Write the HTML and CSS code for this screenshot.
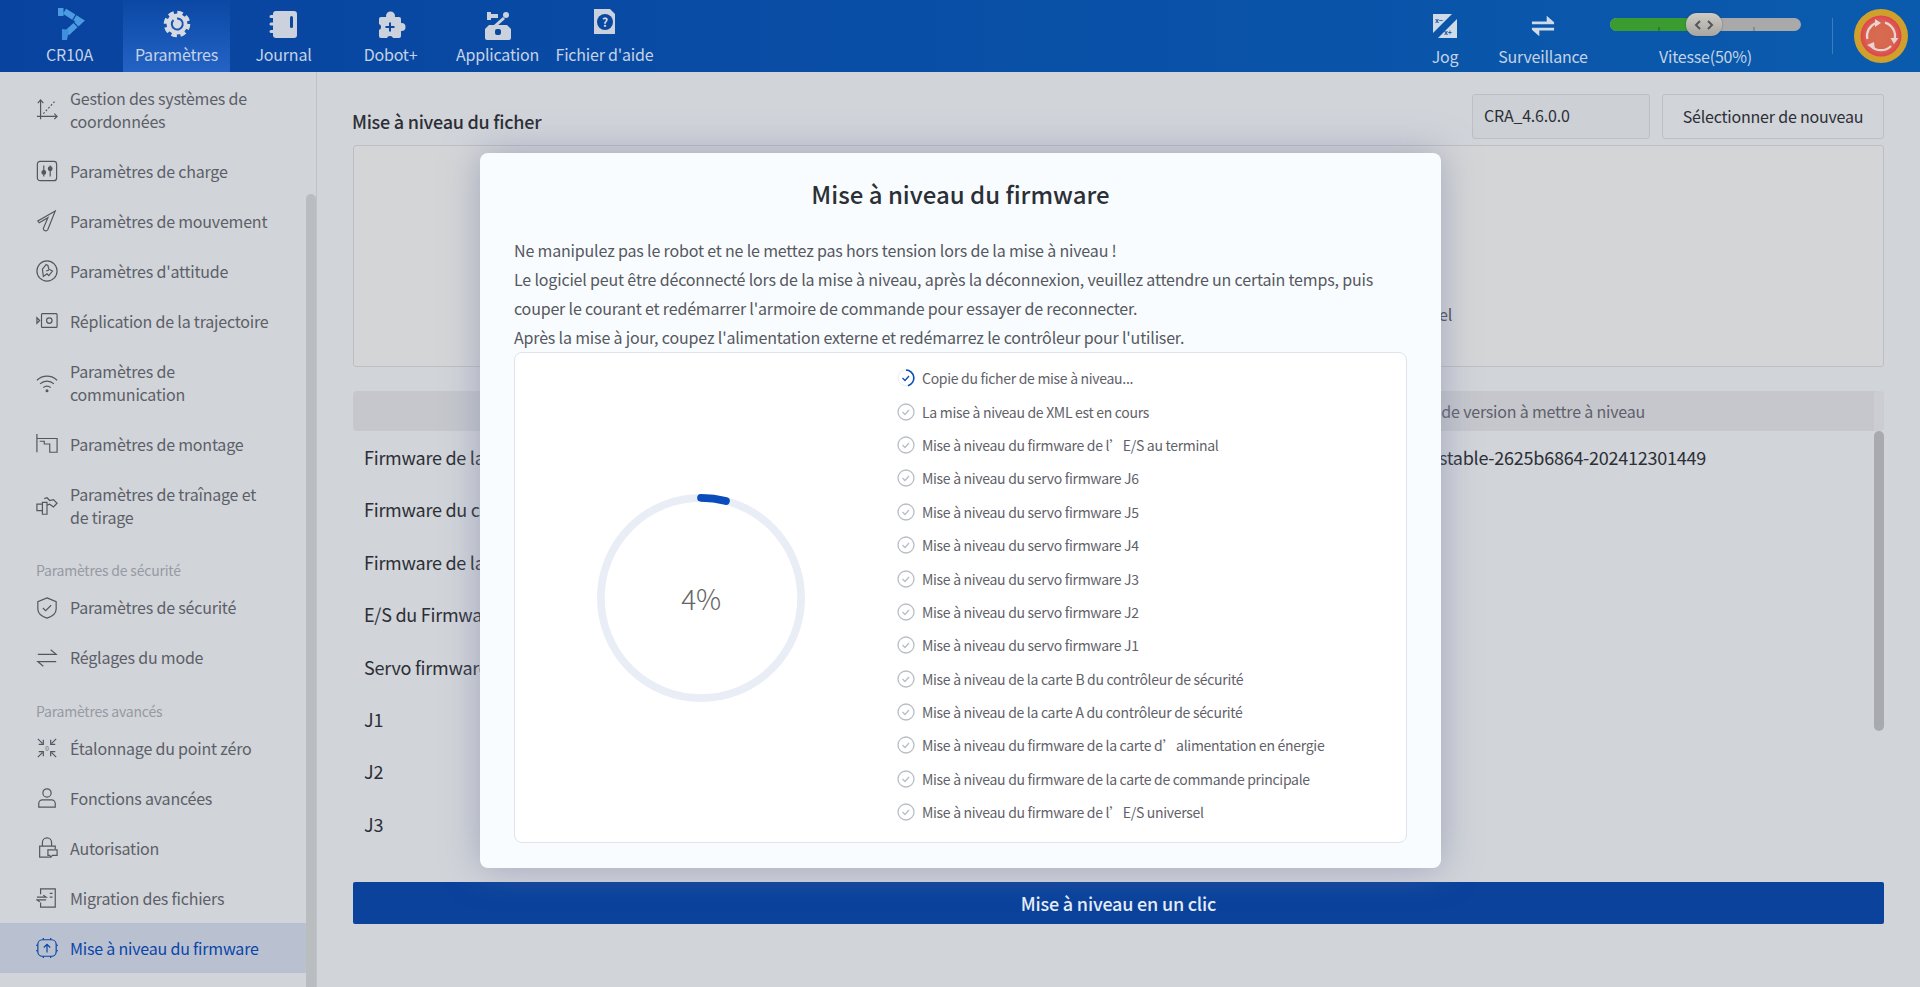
FILE: index.html
```html
<!doctype html>
<html lang="fr">
<head>
  <meta charset="utf-8" />
  <title>Mise à niveau du firmware</title>
  <link rel="stylesheet" href="styles.css">
</head>
<body>
  <header class="topbar">
    <nav class="tabs">
      <a class="tab">
        <svg class="tab-icon" viewBox="0 0 32 32"><path d="M4 0h5.500v8H4z" fill="#4a9be2"/><path d="M10.500 3.300L26 13 13 25" fill="none" stroke="#4a9be2" stroke-width="6" stroke-dasharray="11 1.200 11 1.200 14"/><path d="M8 21l7 1-2 10H8z" fill="#3f8fdc"/></svg>
        <span>CR10A</span>
      </a>
      <a class="tab active">
        <svg class="tab-icon" viewBox="0 0 32 32"><circle cx="16" cy="16" r="10.500" fill="#d5dae3"/><circle cx="16" cy="16" r="11.500" fill="none" stroke="#d5dae3" stroke-width="3.500" stroke-dasharray="5.500 3.530" stroke-linejoin="round"/><path d="M12.500 12a5.500 5.500 0 1 0 3.500-1.500" fill="none" stroke="#1a54b4" stroke-width="2"/></svg>
        <span>Paramètres</span>
      </a>
      <a class="tab">
        <svg class="tab-icon" viewBox="0 0 32 32"><rect x="5" y="3" width="24" height="27" rx="3" fill="#ccd2dd"/><path d="M3 8.500h4M3 16h4M3 23.500h4" stroke="#ccd2dd" stroke-width="3" stroke-linecap="round"/><rect x="22" y="8" width="3" height="12" rx="1.500" fill="#0a479f"/></svg>
        <span>Journal</span>
      </a>
      <a class="tab">
        <svg class="tab-icon" viewBox="0 0 32 32"><rect x="4" y="9" width="22" height="21" rx="2" fill="#ccd2dd"/><circle cx="15.500" cy="8" r="4.500" fill="#ccd2dd"/><circle cx="26.500" cy="19" r="4" fill="#ccd2dd"/><circle cx="3" cy="19" r="3" fill="#0a479f"/><circle cx="15" cy="31" r="3" fill="#0a479f"/><path d="M15 14.500v9M10.500 19h9" stroke="#0a479f" stroke-width="2"/></svg>
        <span>Dobot+</span>
      </a>
      <a class="tab">
        <svg class="tab-icon" viewBox="0 0 32 32"><path d="M5 4h4v8H5zM9 6h7v4H9z" fill="#ccd2dd"/><circle cx="24" cy="7" r="3" fill="#ccd2dd"/><path d="M22 10l-9 8" stroke="#ccd2dd" stroke-width="3"/><path d="M7 17h18l4 4v9a2 2 0 0 1-2 2H5a2 2 0 0 1-2-2v-9z" fill="#ccd2dd"/><rect x="13" y="21" width="6" height="6" rx="2" fill="#0a479f"/></svg>
        <span>Application</span>
      </a>
      <a class="tab">
        <svg class="tab-icon" viewBox="0 0 32 32"><path d="M5 1h16l5 5v20H5z" fill="#ccd2dd"/><circle cx="16" cy="14" r="8" fill="#0a479f"/><text x="16" y="18.500" class="help-mark">?</text></svg>
        <span>Fichier d'aide</span>
      </a>
    </nav>
    <div class="tools">
      <a class="tool tool-jog">
        <svg class="tool-icon" viewBox="0 0 24 24"><path d="M0 0h19L0 19zM24 5v19H5z" fill="#d0dbe8"/><text x="2" y="9" class="jog-mark">x−</text><text x="11" y="21" class="jog-mark">x+</text></svg>
        <span>Jog</span>
      </a>
      <a class="tool tool-watch">
        <svg class="tool-icon" viewBox="0 0 26 24"><path d="M1 7h16V1l8 7v2H1zM25 17H9v6L1 16v-2h24z" fill="#d0dbe8"/></svg>
        <span>Surveillance</span>
      </a>
      <div class="speed">
        <div class="slider">
          <div class="slider-fill"></div>
          <i class="tick tick-low"></i>
          <i class="tick tick-high"></i>
          <div class="slider-handle">
            <svg viewBox="0 0 20 10"><path d="M6 1L2 5l4 4M14 1l4 4-4 4" fill="none" stroke="#55565a" stroke-width="2"/></svg>
          </div>
        </div>
        <span>Vitesse(50%)</span>
      </div>
      <div class="divider"></div>
      <svg class="estop" viewBox="0 0 54 54">
        <defs><radialGradient id="stopfill"><stop offset="0" stop-color="#d56d4f"/><stop offset="0.7" stop-color="#d9654f"/><stop offset="1" stop-color="#e0434f"/></radialGradient></defs>
        <circle cx="27" cy="27" r="27" fill="#cfa02c"/>
        <circle cx="27" cy="27" r="20.500" fill="url(#stopfill)"/>
        <path d="M13.300 30A14 14 0 0 1 22 14M31 13.600A14 14 0 0 1 40.700 30M37 37A14 14 0 0 1 17 37" fill="none" stroke="#e8d5d2" stroke-width="2.200"/>
        <path d="M21 10l6 4-6 4zM36.500 29h8L40 35zM20 33l1 8-8-5z" fill="#e8d5d2"/>
      </svg>
    </div>
  </header>

  <div class="page">
    <aside class="sidebar">
      <ul class="menu">
        <li class="menu-item">
          <svg viewBox="0 0 24 24"><path d="M5 1v21M2 4.500L5 1l3 3.500M1 19h22M20 16l3 3-3 3"/><path d="M8 16L21 2" stroke-dasharray="2 2"/></svg>
          <span>Gestion des systèmes de coordonnées</span>
        </li>
        <li class="menu-item">
          <svg viewBox="0 0 24 24"><rect x="1.500" y="1.500" width="21" height="21" rx="3"/><path d="M8.500 6v12M15.500 6v12"/><circle cx="8.500" cy="13.500" r="2" class="solid"/><circle cx="15.500" cy="9.500" r="2" class="solid"/></svg>
          <span>Paramètres de charge</span>
        </li>
        <li class="menu-item">
          <svg viewBox="0 0 24 24"><path d="M21 1L2 12l1.500 2L13 8.500 8 20a2.600 2.600 0 0 0 4.800 1.500z"/></svg>
          <span>Paramètres de mouvement</span>
        </li>
        <li class="menu-item">
          <svg viewBox="0 0 24 24"><circle cx="12" cy="12" r="11"/><path d="M11 5l-4 5 1 8 4-3 2 2 4-5-4-2-1-4zM14 11l-3 1"/></svg>
          <span>Paramètres d'attitude</span>
        </li>
        <li class="menu-item">
          <svg viewBox="0 0 24 24"><rect x="6" y="4" width="17" height="15" rx="1"/><circle cx="14.500" cy="11.500" r="3"/><path d="M1 8.500l3 3-3 3z"/></svg>
          <span>Réplication de la trajectoire</span>
        </li>
        <li class="menu-item">
          <svg viewBox="0 0 24 24"><path d="M1 9c6-6 16-6 22 0M4.500 13c4-4 11-4 15 0M8 17c2-2 6-2 8 0"/><circle cx="12" cy="20.500" r="1" class="solid"/></svg>
          <span>Paramètres de communication</span>
        </li>
        <li class="menu-item">
          <svg viewBox="0 0 24 24"><path d="M1 1v20M1 6h22v15h-8v-9h-6V9H4"/></svg>
          <span>Paramètres de montage</span>
        </li>
        <li class="menu-item">
          <svg viewBox="0 0 24 24"><path d="M1 10h6v7H1zM7 8h5v13H7zM9 4l3-1 3 3 4-1 4 4-4 4-4-3-3 1"/></svg>
          <span>Paramètres de traînage et de tirage</span>
        </li>
        <li class="menu-section">Paramètres de sécurité</li>
        <li class="menu-item">
          <svg viewBox="0 0 24 24"><path d="M12 1l10 4v8c0 5-4 8-10 10C6 21 2 18 2 13V5z"/><path d="M7.500 12l3 3 6-6"/></svg>
          <span>Paramètres de sécurité</span>
        </li>
        <li class="menu-item">
          <svg viewBox="0 0 24 24"><path d="M2 8h20l-6-5M22 16H2l6 5"/></svg>
          <span>Réglages du mode</span>
        </li>
        <li class="menu-section">Paramètres avancés</li>
        <li class="menu-item">
          <svg viewBox="0 0 24 24"><path d="M2 2l5 5M22 2l-5 5M2 22l5-5M22 22l-5-5M8 3v5H3M16 3v5h5M3 16h5v5M21 16h-5v5"/><text x="12" y="15" class="zero-mark">0</text></svg>
          <span>Étalonnage du point zéro</span>
        </li>
        <li class="menu-item">
          <svg viewBox="0 0 24 24"><circle cx="12" cy="6.500" r="4.500"/><path d="M3 22v-4a4 4 0 0 1 4-4h10a4 4 0 0 1 4 4v4z"/></svg>
          <span>Fonctions avancées</span>
        </li>
        <li class="menu-item">
          <svg viewBox="0 0 24 24"><path d="M7 10V6a5 5 0 0 1 10 0v4M15 22H4V10h17v3"/><path d="M13 14h10v6h-5l-2 2-1-2h-2z"/></svg>
          <span>Autorisation</span>
        </li>
        <li class="menu-item">
          <svg viewBox="0 0 24 24"><path d="M5 8V2h16v20H5v-5M1 11h10l-3-2M11 14H1l3 2M15 7h3M15 11h3"/></svg>
          <span>Migration des fichiers</span>
        </li>
        <li class="menu-item active">
          <svg viewBox="0 0 24 24"><rect x="2" y="3" width="20" height="18" rx="5"/><path d="M12 17V8M8.500 11.500L12 8l3.500 3.500M8 1v2M16 1v2M8 21v2M16 21v2M0 9h2M0 15h2M22 9h2M22 15h2"/></svg>
          <span>Mise à niveau du firmware</span>
        </li>
      </ul>
      <div class="side-scroll"></div>
    </aside>

    <main class="content">
      <div class="file-row">
        <h2 class="file-title">Mise à niveau du ficher</h2>
        <div class="file-name">CRA_4.6.0.0</div>
        <button class="file-btn">Sélectionner de nouveau</button>
      </div>
      <div class="file-box">
        <p>Mise à niveau du firmware de l'E/S universel</p>
      </div>
      <div class="version-table">
        <div class="table-head">
          <span>Nom du firmware</span>
          <span>Numéro de version à mettre à niveau</span>
        </div>
        <div class="table-body">
          <div class="rows">
            <div class="row"><span>Firmware de la carte de commande</span><span>CRA-4.6.0.0-stable-2625b6864-202412301449</span></div>
            <div class="row"><span>Firmware du contrôleur</span></div>
            <div class="row"><span>Firmware de la carte</span></div>
            <div class="row"><span>E/S du Firmware</span></div>
            <div class="row"><span>Servo firmware</span></div>
            <div class="row"><span>J1</span></div>
            <div class="row"><span>J2</span></div>
            <div class="row"><span>J3</span></div>
          </div>
          <div class="table-scroll"></div>
        </div>
      </div>
      <button class="upgrade-btn">Mise à niveau en un clic</button>
    </main>
  </div>

  <section class="modal">
    <h1 class="modal-title">Mise à niveau du firmware</h1>
    <div class="modal-text">
      <p>Ne manipulez pas le robot et ne le mettez pas hors tension lors de la mise à niveau !</p>
      <p>Le logiciel peut être déconnecté lors de la mise à niveau, après la déconnexion, veuillez attendre un certain temps, puis couper le courant et redémarrer l'armoire de commande pour essayer de reconnecter.</p>
      <p>Après la mise à jour, coupez l'alimentation externe et redémarrez le contrôleur pour l'utiliser.</p>
    </div>
    <div class="progress-box">
      <div class="ring">
        <svg viewBox="0 0 216 216">
          <circle cx="108" cy="108" r="104" class="ring-track"/>
          <path d="M108 4A104 104 0 0 1 133.900 7.300" class="ring-value"/>
        </svg>
        <span class="ring-label">4%</span>
      </div>
      <ul class="steps">
        <li class="step current">
          <svg viewBox="0 0 18 18"><circle cx="9" cy="9" r="8" class="spin-bg"/><path d="M9 1a8 8 0 0 1 2 15.700" class="spin"/><path d="M5.500 9l2.500 2.500 4-4.500" class="spin-tick"/></svg>
          <span>Copie du ficher de mise à niveau...</span>
        </li>
        <li class="step"><svg viewBox="0 0 18 18"><circle cx="9" cy="9" r="8"/><path d="M5.500 9l2.500 2.500 4-4.500"/></svg><span>La mise à niveau de XML est en cours</span></li>
        <li class="step"><svg viewBox="0 0 18 18"><circle cx="9" cy="9" r="8"/><path d="M5.500 9l2.500 2.500 4-4.500"/></svg><span>Mise à niveau du firmware de l’E/S au terminal</span></li>
        <li class="step"><svg viewBox="0 0 18 18"><circle cx="9" cy="9" r="8"/><path d="M5.500 9l2.500 2.500 4-4.500"/></svg><span>Mise à niveau du servo firmware J6</span></li>
        <li class="step"><svg viewBox="0 0 18 18"><circle cx="9" cy="9" r="8"/><path d="M5.500 9l2.500 2.500 4-4.500"/></svg><span>Mise à niveau du servo firmware J5</span></li>
        <li class="step"><svg viewBox="0 0 18 18"><circle cx="9" cy="9" r="8"/><path d="M5.500 9l2.500 2.500 4-4.500"/></svg><span>Mise à niveau du servo firmware J4</span></li>
        <li class="step"><svg viewBox="0 0 18 18"><circle cx="9" cy="9" r="8"/><path d="M5.500 9l2.500 2.500 4-4.500"/></svg><span>Mise à niveau du servo firmware J3</span></li>
        <li class="step"><svg viewBox="0 0 18 18"><circle cx="9" cy="9" r="8"/><path d="M5.500 9l2.500 2.500 4-4.500"/></svg><span>Mise à niveau du servo firmware J2</span></li>
        <li class="step"><svg viewBox="0 0 18 18"><circle cx="9" cy="9" r="8"/><path d="M5.500 9l2.500 2.500 4-4.500"/></svg><span>Mise à niveau du servo firmware J1</span></li>
        <li class="step"><svg viewBox="0 0 18 18"><circle cx="9" cy="9" r="8"/><path d="M5.500 9l2.500 2.500 4-4.500"/></svg><span>Mise à niveau de la carte B du contrôleur de sécurité</span></li>
        <li class="step"><svg viewBox="0 0 18 18"><circle cx="9" cy="9" r="8"/><path d="M5.500 9l2.500 2.500 4-4.500"/></svg><span>Mise à niveau de la carte A du contrôleur de sécurité</span></li>
        <li class="step"><svg viewBox="0 0 18 18"><circle cx="9" cy="9" r="8"/><path d="M5.500 9l2.500 2.500 4-4.500"/></svg><span>Mise à niveau du firmware de la carte d’alimentation en énergie</span></li>
        <li class="step"><svg viewBox="0 0 18 18"><circle cx="9" cy="9" r="8"/><path d="M5.500 9l2.500 2.500 4-4.500"/></svg><span>Mise à niveau du firmware de la carte de commande principale</span></li>
        <li class="step"><svg viewBox="0 0 18 18"><circle cx="9" cy="9" r="8"/><path d="M5.500 9l2.500 2.500 4-4.500"/></svg><span>Mise à niveau du firmware de l’E/S universel</span></li>
      </ul>
    </div>
  </section>
</body>
</html>
```

FILE: styles.css
```css
* {
  box-sizing: border-box;
}
html, body {
  margin: 0;
  height: 987px;
  overflow: hidden;
}
body {
  position: relative;
  background: #d1d4d9;
  font-family: "Noto Sans CJK SC", "Noto Sans", sans-serif;
  font-size: 16px;
  letter-spacing: -0.2px;
  color: #2c2f36;
}
ul {
  list-style: none;
  margin: 0;
  padding: 0;
}
p, h1, h2 {
  margin: 0;
}

/* top bar */
.topbar {
  display: flex;
  justify-content: space-between;
  height: 72px;
  padding-left: 16px;
  background: linear-gradient(90deg, #08439f, #0a5bae);
  color: #c4d3e6;
}
.tabs {
  display: flex;
}
.tab {
  display: flex;
  flex-direction: column;
  align-items: center;
  width: 107px;
  padding-top: 8px;
  line-height: 24px;
}
.tab.active {
  background: linear-gradient(180deg, #0b48a4, #2463c5);
}
.tab-icon {
  width: 32px;
  height: 32px;
  margin-bottom: 2px;
}
.help-mark {
  font-size: 12px;
  font-weight: 700;
  text-anchor: middle;
  fill: #d5dde9;
}
.jog-mark {
  font-size: 7px;
  font-weight: 700;
  fill: #0a52a8;
}
.zero-mark {
  font-size: 7px;
  text-anchor: middle;
  fill: #54575e;
  stroke: none;
}
.tools {
  display: flex;
  padding-right: 12px;
}
.tool {
  display: flex;
  flex-direction: column;
  align-items: center;
  padding-top: 14px;
  line-height: 24px;
}
.tool-jog {
  width: 60px;
}
.tool-watch {
  width: 110px;
  margin-left: 13px;
}
.tool-icon {
  width: 24px;
  height: 24px;
  margin-bottom: 6px;
}
.speed {
  display: flex;
  flex-direction: column;
  align-items: center;
  width: 191px;
  margin-left: 12px;
  padding-top: 18px;
}
.speed span {
  margin-top: 13px;
  line-height: 24px;
}
.slider {
  position: relative;
  width: 100%;
  height: 13px;
  border-radius: 7px;
  background: #a9a9a9;
}
.slider-fill {
  width: 50%;
  height: 100%;
  border-radius: 7px 0 0 7px;
  background: #3a9b30;
}
.tick {
  position: absolute;
  bottom: 0;
  width: 2px;
  height: 4px;
  background: #8b8b8b;
}
.tick-low {
  left: 48px;
  background: #2f7d28;
}
.tick-high {
  left: 143px;
}
.slider-handle {
  position: absolute;
  left: 76px;
  top: -5px;
  display: flex;
  align-items: center;
  justify-content: center;
  width: 36px;
  height: 23px;
  border-radius: 11px;
  background: linear-gradient(180deg, #cfcbc4, #a8a6a2);
  box-shadow: 0 0 2px rgba(40, 40, 40, .5);
}
.slider-handle svg {
  width: 20px;
  height: 10px;
}
.divider {
  width: 1px;
  height: 36px;
  margin: 18px 0 0 31px;
  background: #3f7cbb;
}
.estop {
  width: 54px;
  height: 54px;
  margin: 9px 0 0 21px;
}

/* page */
.page {
  display: flex;
  height: 915px;
}
.sidebar {
  display: flex;
  flex: none;
  width: 317px;
  border-right: 1px solid #bfc2c7;
}
.menu {
  width: 306px;
  padding-top: 1px;
  color: #5c5f68;
}
.menu-item {
  display: flex;
  align-items: center;
  gap: 12px;
  min-height: 50px;
  padding: 13.500px 32px 13.500px 36px;
  line-height: 23px;
}
.menu-item svg {
  flex: none;
  width: 22px;
  height: 22px;
  fill: none;
  stroke: #54575e;
  stroke-width: 1.3;
}
.menu-item svg .solid {
  fill: #54575e;
}
.menu-item.active {
  background: #b9c1d1;
  color: #0a45a8;
}
.menu-item.active svg {
  stroke: #0a45a8;
}
.menu-section {
  height: 40.500px;
  padding: 17px 36px 0;
  font-size: 14px;
  line-height: 22px;
  color: #969aa3;
}
.side-scroll {
  width: 10px;
  margin-top: 122px;
  border-radius: 5px 5px 0 0;
  background: #b9bdc0;
}
.content {
  flex: 1;
  padding: 22px 36px 0;
}
.file-row {
  display: flex;
  align-items: center;
  height: 45px;
}
.file-title {
  flex: 1;
  font-size: 18px;
  font-weight: 500;
  letter-spacing: -0.25px;
  line-height: 26px;
  margin: 9px 0 0 -1px;
}
.file-name {
  width: 178px;
  height: 45px;
  padding: 0 11px;
  border: 1px solid #bcbfc4;
  border-radius: 3px;
  background: #cdd0d5;
  line-height: 41px;
}
.file-btn {
  width: 222px;
  height: 45px;
  margin-left: 12px;
  padding-bottom: 3px;
  border: 1px solid #bcbfc4;
  border-radius: 3px;
  background: #d1d4d9;
  font: inherit;
  letter-spacing: inherit;
  color: inherit;
}
.file-box {
  height: 222px;
  margin-top: 6px;
  padding: 156px 0 0 600px;
  border: 1px solid #bcbec3;
  border-radius: 3px;
  background: #d4d5d7;
  color: #4a4c52;
  line-height: 24px;
}
.file-box p {
  width: 498px;
  text-align: right;
}
.version-table {
  height: 477px;
  margin-top: 24px;
}
.table-head {
  display: flex;
  justify-content: space-between;
  width: 100%;
  height: 40px;
  padding: 0 239px 0 300px;
  border-radius: 4px;
  background: linear-gradient(90deg, #c5c7cc calc(100% - 10px), #cbcdd2 0);
  color: #5f5f6b;
  line-height: 40px;
}
.table-body {
  display: flex;
  justify-content: space-between;
}
.rows {
  width: 1521px;
}
.row {
  display: flex;
  justify-content: space-between;
  height: 52.400px;
  padding: 0 168px 0 11px;
  font-size: 18px;
  letter-spacing: -0.25px;
  line-height: 52px;
}
.table-scroll {
  width: 10px;
  height: 300px;
  border-radius: 5px;
  background: #a8aaae;
}
.upgrade-btn {
  display: block;
  width: 100%;
  height: 42px;
  margin-top: 14px;
  border: 0;
  border-radius: 2px;
  background: #0a429c;
  color: #e6edf7;
  font: inherit;
  font-size: 18px;
  font-weight: 500;
  letter-spacing: -0.2px;
}

/* modal */
.modal {
  position: absolute;
  left: 480px;
  top: 153px;
  width: 961px;
  height: 715px;
  padding: 0 34px;
  border-radius: 8px;
  background: #f9fcff;
  box-shadow: 0 0 36px rgba(120, 130, 165, .55);
}
.modal-title {
  padding-top: 23px;
  font-size: 24px;
  font-weight: 500;
  letter-spacing: 0;
  line-height: 36px;
  text-align: center;
  color: #2b2f36;
}
.modal-text {
  margin-top: 24px;
  color: #55585e;
  letter-spacing: -0.17px;
  line-height: 29px;
}
.progress-box {
  display: flex;
  height: 491px;
  border: 1px solid #dfe4ea;
  border-radius: 8px;
  background: #fff;
}
.ring {
  position: relative;
  flex: none;
  width: 208px;
  height: 208px;
  margin: 141px 0 0 82px;
}
.ring svg {
  width: 208px;
  height: 208px;
}
.ring-track {
  fill: none;
  stroke: #e9edf5;
  stroke-width: 8;
}
.ring-value {
  fill: none;
  stroke: #0a4cbb;
  stroke-width: 8;
  stroke-linecap: round;
}
.ring-label {
  position: absolute;
  left: 0;
  right: 0;
  top: 84px;
  font-size: 28px;
  font-weight: 300;
  line-height: 40px;
  text-align: center;
  color: #666;
}
.steps {
  margin: 8.500px 0 0 92px;
  color: #5f6269;
  font-size: 14px;
  letter-spacing: -0.3px;
}
.step {
  display: flex;
  align-items: center;
  gap: 7px;
  height: 33.400px;
}
.step svg {
  flex: none;
  width: 18px;
  height: 18px;
  fill: none;
  stroke: #b9bdc4;
  stroke-width: 1.3;
}
.step .spin-bg {
  stroke: #eef1f5;
}
.step .spin {
  stroke: #0a4cbb;
  stroke-width: 1.6;
}
.step .spin-tick {
  stroke: #0a4cbb;
}
```
